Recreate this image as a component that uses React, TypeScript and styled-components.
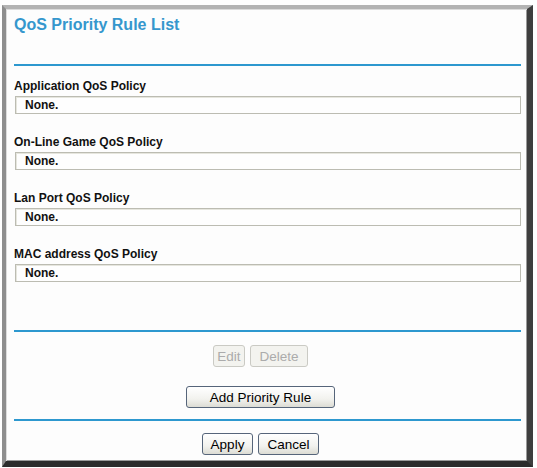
import React from "react";
import styled, {createGlobalStyle} from "styled-components";

const GlobalStyle = createGlobalStyle`
  html, body {
    margin: 0;
    padding: 0;
    background: #ffffff;
  }
  body {
    font-family: "Liberation Sans", Arial, sans-serif;
  }
`;

export const Page = styled.div`
  width: 537px;
  height: 468px;
  padding: 5px 4px 1px 2px;
  box-sizing: border-box;
  background: #ffffff;
`;

export const Frame = styled.div`
  height: 100%;
  box-sizing: border-box;
  border-style: solid;
  border-width: 4px 6px 6px 4px;
  border-color: #b4b4b4 #3e3e3e #2c2c2c #8e8e8e;
  box-shadow: inset 1px 1px 0 #dcdcdc, inset -1px -1px 0 #9a9a9a;
  background: #fdfdfd;
  padding: 0 6px 0 8px;
  display: flex;
  flex-direction: column;
`;

export const Title = styled.h1`
  margin: 0;
  padding-top: 6px;
  height: 49px;
  font-size: 16px;
  line-height: 20px;
  font-weight: bold;
  color: #3597cd;
`;

export const Rule = styled.div<{ $top?: number }>`
  height: 2px;
  margin-top: ${p => p.$top ?? 0}px;
  background: #2d98cf;
  flex-shrink: 0;
`;

export const Sections = styled.div`
  padding-top: 13px;
  height: 264px;
  box-sizing: border-box;
  display: flex;
  flex-direction: column;
  gap: 21px;
`;

export const Section = styled.div`
  display: flex;
  flex-direction: column;
  gap: 3px;
`;

export const Label = styled.div`
  font-size: 12px;
  line-height: 14px;
  font-weight: bold;
  color: #111111;
`;

export const ValueBox = styled.div`
  height: 16px;
  margin-left: 1px;
  border: 1px solid #bcbcb2;
  box-shadow: inset 1px 1px 0 #e6e6de;
  background: #fefefe;
  padding-left: 9px;
  font-size: 12px;
  line-height: 16px;
  font-weight: bold;
  color: #111111;
`;

export const ButtonRow = styled.div<{ $top: number }>`
  display: flex;
  justify-content: center;
  gap: 5px;
  padding-top: ${p => p.$top}px;
  padding-right: 14px;
`;

export const Button = styled.button<{ $w: number }>`
  width: ${p => p.$w}px;
  height: 22px;
  padding: 0;
  font-family: "Liberation Sans", Arial, sans-serif;
  font-size: 13.5px;
  color: #000000;
  border: 1px solid #56657a;
  border-radius: 3px;
  background: linear-gradient(#ffffff, #f2f2ee 60%, #dcdcd4);
  &:disabled {
    color: #ababab;
    border-color: #cacac4;
    background: #f3f3ef;
  }
`;

const policies = [
    'Application QoS Policy',
    'On-Line Game QoS Policy',
    'Lan Port QoS Policy',
    'MAC address QoS Policy',
];

const App = () => {
    return (
        <>
            <GlobalStyle/>
            <Page>
                <Frame>
                    <Title>QoS Priority Rule List</Title>
                    <Rule/>
                    <Sections>
                        {policies.map(name => (
                            <Section key={name}>
                                <Label>{name}</Label>
                                <ValueBox>None.</ValueBox>
                            </Section>
                        ))}
                    </Sections>
                    <Rule/>
                    <ButtonRow $top={13}>
                        <Button $w={32} disabled>Edit</Button>
                        <Button $w={58} disabled>Delete</Button>
                    </ButtonRow>
                    <ButtonRow $top={19}>
                        <Button $w={149}>Add Priority Rule</Button>
                    </ButtonRow>
                    <Rule $top={11}/>
                    <ButtonRow $top={12}>
                        <Button $w={51}>Apply</Button>
                        <Button $w={61}>Cancel</Button>
                    </ButtonRow>
                </Frame>
            </Page>
        </>
    );
};

export default App;
